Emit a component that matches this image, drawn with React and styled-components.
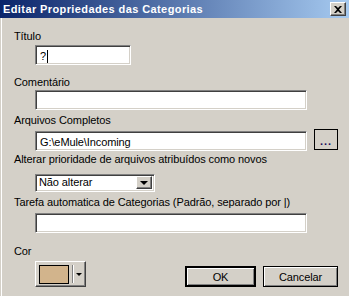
import React from "react";
import styled, { createGlobalStyle } from "styled-components";

const Global = createGlobalStyle`
  html, body { margin: 0; padding: 0; background: #D4D0C8; }
  body { font-family: "Liberation Sans", Arial, sans-serif; font-size: 11px; color: #000; letter-spacing: -0.1px; }
`;

const Window = styled.div`
  width: 349px;
  height: 296px;
  background: #D4D0C8;
  display: flex;
  flex-direction: column;
  overflow: hidden;
`;

const TitleBar = styled.div`
  height: 18px;
  display: flex;
  align-items: center;
  background: linear-gradient(to right, #0A246A, #A6CAF0);
  padding-left: 3px;
  padding-right: 3px;
`;

const TitleText = styled.div`
  flex: 1;
  color: #fff;
  font-weight: bold;
  font-size: 11px;
  letter-spacing: 0.4px;
  line-height: 18px;
  white-space: nowrap;
`;

const raised = `
  background: #D4D0C8;
  border: 1px solid;
  border-color: #fff #404040 #404040 #fff;
  box-shadow: inset -1px -1px #808080, inset 1px 1px #D4D0C8;
  box-sizing: border-box;
`;

const CloseButton = styled.div`
  ${raised}
  width: 16px;
  height: 14px;
  display: flex;
  align-items: center;
  justify-content: center;
`;

const Body = styled.div`
  flex: 1;
  padding-left: 14px;
  padding-right: 11px;
  box-shadow: inset 1px 0 #D4D0C8, inset 2px 0 #fff;
  display: flex;
  flex-direction: column;
`;

const Label = styled.div`
  line-height: 13px;
  height: 13px;
  margin-top: ${(p) => p.$mt || 0}px;
  white-space: nowrap;
`;

const Sunken = styled.div`
  box-sizing: border-box;
  background: #fff;
  border: 1px solid;
  border-color: #808080 #fff #fff #808080;
  box-shadow: inset 1px 1px #404040, inset -1px -1px #D4D0C8;
`;

const TextField = styled(Sunken)`
  width: ${(p) => p.$w}px;
  height: 20px;
  margin-left: 21px;
  margin-top: ${(p) => p.$mt || 0}px;
  padding: 2px 3px 0 4px;
  line-height: 15px;
  white-space: nowrap;
  display: flex;
  align-items: center;
  flex-shrink: 0;
`;

const Caret = styled.span`
  display: inline-block;
  width: 1px;
  height: 13px;
  background: #000;
  margin-left: 1px;
`;

const Row = styled.div`
  display: flex;
  align-items: flex-start;
`;

const BrowseButton = styled.div`
  box-sizing: border-box;
  width: 24px;
  height: 21px;
  margin-left: 7px;
  margin-top: ${(p) => p.$mt || 0}px;
  border: 1px solid #000;
  background: #D4D0C8;
  display: flex;
  align-items: flex-end;
  justify-content: center;
  padding-bottom: 4px;
  font-size: 11px;
  line-height: 8px;
  color: #1a0f5a;
  letter-spacing: 1px;
  font-weight: bold;
`;

const Combo = styled(Sunken)`
  width: 120px;
  height: 18px;
  margin-left: 21px;
  margin-top: ${(p) => p.$mt || 0}px;
  display: flex;
  align-items: center;
  padding: 1px 2px 2px 3px;
`;

const ComboText = styled.div`
  flex: 1;
  line-height: 13px;
  white-space: nowrap;
`;

const ComboArrow = styled.div`
  ${raised}
  width: 16px;
  height: 13px;
  display: flex;
  align-items: center;
  justify-content: center;
`;

const BottomRow = styled.div`
  display: flex;
  justify-content: space-between;
  align-items: flex-end;
  margin-top: 12px;
`;

const Column = styled.div`
  display: flex;
  flex-direction: column;
`;

const ColorButton = styled.div`
  ${raised}
  width: 51px;
  height: 26px;
  margin-left: 21px;
  margin-top: 3px;
  display: flex;
  align-items: center;
  padding: 0 3px;
`;

const Swatch = styled.div`
  box-sizing: border-box;
  width: 33px;
  height: 19px;
  background: ${(p) => p.$color};
  border: 1px solid #000;
`;

const Separator = styled.div`
  width: 1px;
  height: 18px;
  margin-left: 3px;
  background: #808080;
  box-shadow: 1px 0 #fff;
`;

const Arrow = styled.div`
  margin-left: ${(p) => p.$ml || 0}px;
  width: 0;
  height: 0;
  border-left: ${(p) => p.$s}px solid transparent;
  border-right: ${(p) => p.$s}px solid transparent;
  border-top: ${(p) => p.$s}px solid #000;
`;

const Buttons = styled.div`
  display: flex;
  gap: 7px;
`;

const PushButton = styled.div`
  box-sizing: border-box;
  width: ${(p) => p.$w}px;
  height: 21px;
  background: #D4D0C8;
  display: flex;
  align-items: center;
  justify-content: center;
  font-size: 11px;
  border: ${(p) => (p.$default ? 2 : 1)}px solid #000;
  box-shadow: inset 1px 1px #fff, inset -1px -1px #808080;
`;

export default function App() {
  return (
    <>
      <Global />
      <Window>
        <TitleBar>
          <TitleText>Editar Propriedades das Categorias</TitleText>
          <CloseButton>
            <svg width="8" height="7" viewBox="0 0 8 7">
              <path d="M0 0h2l2 2 2-2h2L5 3.5 8 7H6L4 5 2 7H0l3-3.5z" fill="#000" />
            </svg>
          </CloseButton>
        </TitleBar>
        <Body>
          <Label $mt={12}>Título</Label>
          <TextField $w={96} $mt={2}>
            ?<Caret />
          </TextField>
          <Label $mt={11}>Comentário</Label>
          <TextField $w={272} $mt={1} />
          <Label $mt={4}>Arquivos Completos</Label>
          <Row>
            <TextField $w={272} $mt={4}>G:\eMule\Incoming</TextField>
            <BrowseButton $mt={2}>...</BrowseButton>
          </Row>
          <Label $mt={2}>Alterar prioridade de arquivos atribuídos como novos</Label>
          <Combo $mt={8}>
            <ComboText>Não alterar</ComboText>
            <ComboArrow>
              <Arrow $s={4} />
            </ComboArrow>
          </Combo>
          <Label $mt={4}>Tarefa automatica de Categorias (Padrão, separado por |)</Label>
          <TextField $w={272} $mt={4} />
          <BottomRow>
            <Column>
              <Label>Cor</Label>
              <ColorButton>
                <Swatch $color="#D2B48C" />
                <Separator />
                <Arrow $s={3} $ml={3} />
              </ColorButton>
            </Column>
            <Buttons>
              <PushButton $w={71} $default>OK</PushButton>
              <PushButton $w={75}>Cancelar</PushButton>
            </Buttons>
          </BottomRow>
        </Body>
      </Window>
    </>
  );
}
